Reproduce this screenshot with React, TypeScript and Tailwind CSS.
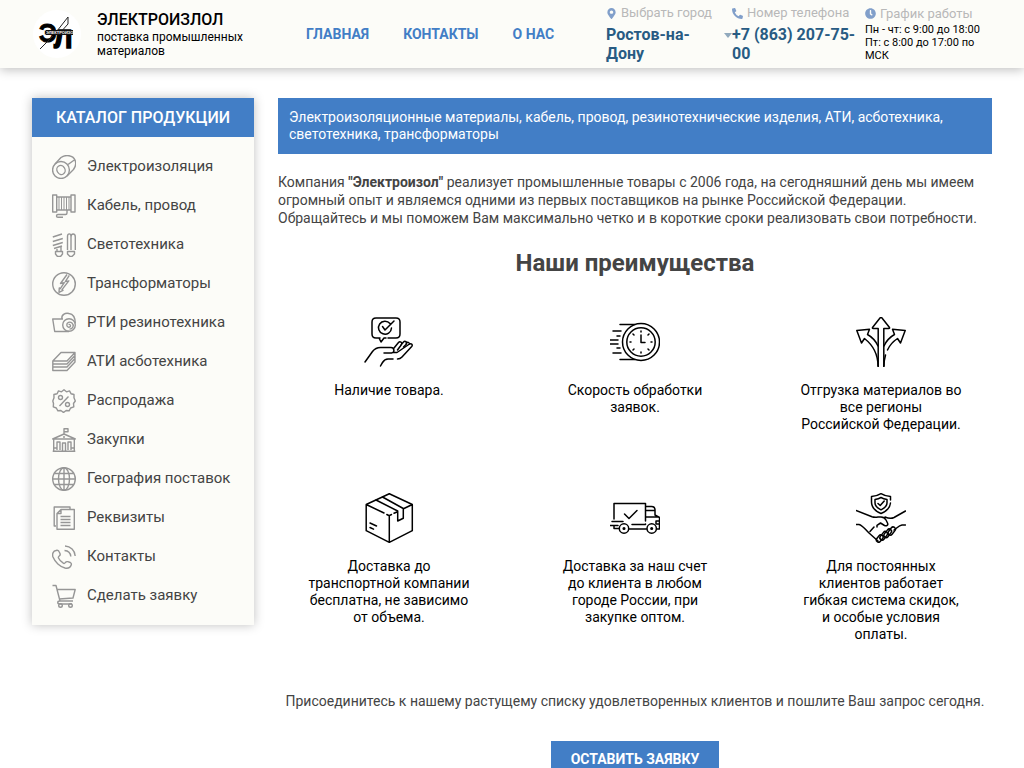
import type { ReactNode } from 'react';
import { FaClock, FaMapMarkerAlt, FaPhoneAlt } from 'react-icons/fa';

type Item = { title: string; icon: ReactNode };

const navigation = ['Главная', 'Контакты', 'О нас'];

const catalog: Item[] = [
  {
    title: 'Электроизоляция',
    icon: (
      <>
        <ellipse cx="9" cy="15" rx="8.4" ry="8.5" />
        <ellipse cx="9" cy="15" rx="4" ry="4.6" transform="rotate(-30 9 15)" />
        <path d="M3 9 9 2.500C14-1 21 .5 23 5c1.200 3 .8 6.500-1.500 9.500L15 21M16 9.500l7-5" />
      </>
    ),
  },
  {
    title: 'Кабель, провод',
    icon: (
      <>
        <path d="M.7 1h4v17h-4zM19 1h4v17h-4zM4.700 3H19M4.700 16H19" />
        <path d="M7 3v13M9.500 3v13M12 3v13M14.500 3v13M17 3v13" strokeWidth="1" />
        <path d="M15 16v3c0 1-.5 1.500-1.500 1.500H6c-2 0-2 2.800 0 2.800h5" />
      </>
    ),
  },
  {
    title: 'Светотехника',
    icon: (
      <>
        <path d="M.8 4 10 1M.8 8.500l10-3M.8 12.500l10-3M2 15.500l8-2.500M5 14.500v4M9 13v5.500M3.500 18.500h7v2.500L8.500 23.500h-3L3.500 21z" />
        <path d="M15.500 17V3.500c0-3.500 3.500-3.500 3.500 0V17M19 4c0-4 4.300-4 4.300 0v13M15.500 18.500h7v2.500l-2.500 2.500h-2l-2.500-2.500z" />
      </>
    ),
  },
  {
    title: 'Трансформаторы',
    icon: (
      <>
        <circle cx="12" cy="12" r="11.300" />
        <path d="m15 2.500-6.500 9 3.800-.8-4 6-1-.8-.3 4.500 4-2-1-.8 6.800-8.700-3.500.7 4-6.300" />
      </>
    ),
  },
  {
    title: 'РТИ резинотехника',
    icon: (
      <>
        <path d="M11 8H.7l2 12.500H17M10 8c-1-4 3-6.500 7-5.500 4 .5 6.300 4 6.300 10" />
        <circle cx="17" cy="14" r="6.300" />
        <path d="M17 14c0-1 1.500-.5 1.500.8 0 2-3.500 2-3.700-.5-.2-3 3.200-4 5.200-2.200 2.500 2.300.8 6-2.500 6" />
      </>
    ),
  },
  {
    title: 'АТИ асботехника',
    icon: (
      <path d="M9 2.500h14l-8 8.500H.8zM.8 11v3H15l8-8.500v-3M.8 14v3H15l8-8.500v-3M.8 17v3.500H15l8-8.500V8.500" />
    ),
  },
  {
    title: 'Распродажа',
    icon: (
      <>
        <path d="m12 .8 2.500 2 3-.9 1.500 2.800 3 .8v3.200l1.300 3.300-1.800 2.500.3 3.300-3.200 1.200-1.500 2.800-3-.3-2.600 2-2.600-2-3 .3-1.600-2.800-3-1.200.2-3.300L.8 12 2 8.700 1.900 5.500l3.200-.8 1.400-2.800 3 .9z" />
        <circle cx="8.500" cy="8.500" r="2" />
        <circle cx="15.500" cy="15.500" r="2" />
        <path d="M16.500 7.500 7.500 17" />
      </>
    ),
  },
  {
    title: 'Закупки',
    icon: (
      <path d="M.7 23.300h22.600M1.700 23V11M22.300 23V11M.7 11l11.300-5 11.300 5zM12 6V.8h4v3h-4M5 22v-8h3v8M10.500 23v-8h3v8M16 22v-8h3v8M11 9h2M2 20h3M19 20h3" />
    ),
  },
  {
    title: 'География поставок',
    icon: (
      <>
        <circle cx="12" cy="12" r="11.300" />
        <ellipse cx="12" cy="12" rx="5.500" ry="11.300" />
        <path d="M.7 12h22.600M12 .7v22.600M2.500 6.500h19M2.500 17.500h19" />
      </>
    ),
  },
  {
    title: 'Реквизиты',
    icon: (
      <path d="M4 20H2.200V1H18v2M9 3.500h13.300v19.800H5V7.500zv4H5M8.500 10.500h10M8.500 13.500h10M8.500 16.500h10M8.500 19.500h10" />
    ),
  },
  {
    title: 'Контакты',
    icon: (
      <>
        <path d="M4 5.500C1.500 6-.2 8.500 1 12c2 5 7 9.800 12 11 3 .6 5.500-.8 6.300-3.300.3-1-.2-1.700-1-2.200l-2.500-.8c-1-.3-2 .2-2.500 1-.5.700-1.300 1-2 .5-2-1.200-4-3.500-4.800-5.200-.3-.8 0-1.500.7-2 .8-.5 1.200-1.500.8-2.500L7 6.500C6.500 5.300 5.200 5 4 5.500z" />
        <path d="M13 1c5.500.2 10 4.500 10.200 10M12.500 5.500c4 .3 6 2.500 6.300 6" />
      </>
    ),
  },
  {
    title: 'Сделать заявку',
    icon: (
      <>
        <path d="M.5 1.500H4L8 17h13M5.200 5.500h18l-2.200 8.500L7.200 15M8 17c-3 0-3 3 0 3h12" />
        <circle cx="8.500" cy="21.500" r="1.800" />
        <circle cx="18.500" cy="21.500" r="1.800" />
      </>
    ),
  },
];

const advantages: Item[] = [
  {
    title: 'Наличие товара.',
    icon: (
      <>
        <path d="M16 21h-4c-2.700 0-4-1.400-4-4V5c0-2.700 1.300-4 4-4h20c2.700 0 4 1.300 4 4v12c0 2.600-1.300 4-4 4h-8M15 21l2 4 3-4h2" />
        <path d="M26 6.500A6.500 6.500 0 1 0 27.500 11M18.500 9.500 21 13l9-9" />
        <path d="M1 45 8.500 34.500c2-2.600 4.500-4 8-4H27c3.500 0 4 5 .5 5.500H20M29 35.500h4L45.500 27c2-1 3.500.7 2.200 2.500L38 40c-1.200 1.300-2.500 2-4.500 2M29 42h-5c-3 0-4 1-5.500 3.500L16.500 49" />
        <path d="m30 31 4.500-5.500c1.500-1.700 4.200 0 3 2L33.500 33M36.500 28.500l3-3.500c1.500-1.700 4.200 0 3 2l-3 3M42 26c1.500-1.500 3.500-.5 3.500 1" />
      </>
    ),
  },
  {
    title: 'Скорость обработки заявок.',
    icon: (
      <>
        <circle cx="31" cy="25" r="18.500" />
        <circle cx="31" cy="25" r="14.200" />
        <path d="M10 7.500h15M3 14h8M7 19h3M0 23h8M0 27h8M7 31h3M3 36h8M10 42.500h15M31 18v7.500h4M31 14v1M31 35v1M20 25h1M41 25h1M23 17l1 1M39 17l-1 1M23 33l1-1M39 33l-1-1" />
      </>
    ),
  },
  {
    title: 'Отгрузка материалов во все регионы Российской Федерации.',
    icon: (
      <>
        <path d="M22.200 50V11.500h-5c-.8 0-1-.5-.5-1.200L24 1c.7-.8 1.300-.8 2 0l7.300 9.300c.5.700.3 1.200-.5 1.200h-5V50" />
        <path d="M22 49c0-11-4-20-13.500-27.500l-3 4.500L.8 13.500 13.500 12.300l-2 5.200C16 20 19.500 23.500 22 29M28 49c0-4 .5-7.500 1.500-11M31.500 33c2-4.500 5.500-8.500 10-11.500l3 4.500 4.700-12.500-12.700-1.200 2 5.200C34 20 30.500 23.500 28 29" />
      </>
    ),
  },
  {
    title: 'Доставка до транспортной компании бесплатна, не зависимо от объема.',
    icon: (
      <>
        <path d="M20 20 2.200 11.500 25.300.7l23 10.800v26.200l-23 11.600L2.200 37.700V11.500M25.300 49V23M48.300 11.500 40 15.500M33 19l-3 1.300M27.500 21.500l-2.200 1.200-2.500-1.200" />
        <path d="m12 7 21.700 11v10l5.600-2.700V15.500L18.500 4M6 30l6.500 3M6 34.500l3.500 1.700" />
      </>
    ),
  },
  {
    title: 'Доставка за наш счет до клиента в любом городе России, при закупке оптом.',
    icon: (
      <>
        <path d="M4 26V10.500h31.500V28M22 31.500h13.500V31M2 28.500h11M0 32.500h8M4 33v2.500h5M19 36h17.500M47 36h2.500V24.500L45 22V17c0-2-1.200-3.500-3.500-3.500h-6M36 24h13M36 17.500h9M49 28h-3v3h3" />
        <circle cx="14" cy="35.500" r="4.700" />
        <circle cx="41.700" cy="35.500" r="4.700" />
        <circle cx="14" cy="35.500" r=".8" />
        <circle cx="41.700" cy="35.500" r=".8" />
        <path d="m14.500 21 4.500 4.500 8-8" />
      </>
    ),
  },
  {
    title: 'Для постоянных клиентов работает гибкая система скидок, и особые условия оплаты.',
    icon: (
      <>
        <path d="M34.500 7V3.500C31 3.500 28 2.500 25 .7 22 2.500 19 3.500 15.500 3.500V9c0 5.500 3.500 9 9.500 11.500 5.500-2.300 9-5.500 9.500-10.500" />
        <path d="M25 4.500c-2 1.200-4 1.700-6 2V10c0 3.200 2.500 5 6 6.800 3.500-1.800 6-3.600 6-6.800V6.500c-2-.3-4-.8-6-2zM22 10.500l2.200 2 4-4.500" />
        <path d="m0 17.500 16 6.200c2 .7 4 .6 6 .3h3c3 0 4 1.200 5 3l1.500 3c1 2-1 3.500-3 2.500l-4-2.500-3.500 2.300v1.700M49.500 18 38 24.500c-3 1.500-5.500 1-9-.5M0 31.500h3c4 1 6 5 10 8.500l9 8M49.500 32H46c-3 .5-5 3-8 5M18 34l-4 4.500" />
        <rect x="21.500" y="41.500" width="4.500" height="8" rx="2.200" transform="rotate(38 23.700 45.500)" />
        <rect x="25.500" y="38" width="4.500" height="9.500" rx="2.200" transform="rotate(38 27.700 42.700)" />
        <rect x="29.500" y="35.500" width="4.500" height="9.500" rx="2.200" transform="rotate(38 31.700 40.200)" />
        <rect x="33.500" y="33.500" width="4.500" height="9" rx="2.200" transform="rotate(38 35.700 38)" />
      </>
    ),
  },
];

function Logo() {
  return (
    <svg viewBox="0 0 48 48" className="size-12 shrink-0 font-['Liberation_Sans',sans-serif] font-bold" aria-hidden="true">
      <circle cx="24" cy="24" r="24" fill="#fff" />
      <text x="6" y="32" fontSize="25" stroke="#000" strokeWidth="1">Э</text>
      <text x="21" y="38" fontSize="26" stroke="#000" strokeWidth="1.500">Л</text>
      <path d="M7 39 20 26M24 21 35 7v7l-9 10" fill="none" stroke="#222" />
      <rect x="13" y="20" width="27" height="5" fill="#111" />
      <text x="13" y="24" fontSize="4" fill="#fff">ЭЛЕКТРОИЗОЛ</text>
    </svg>
  );
}

function Header() {
  return (
    <header className="relative flex h-17 bg-[#fcfcf8] pl-[33px] pr-8 shadow-[0_2px_10px_rgba(0,0,0,0.25)]">
      <a href="#" className="flex w-[273px] shrink-0 items-center gap-4 text-black">
        <Logo />
        <span className="w-40">
          <span className="block text-base leading-5 font-medium">ЭЛЕКТРОИЗЛОЛ</span>
          <span className="block text-xs leading-[14px]">поставка промышленных материалов</span>
        </span>
      </a>

      <nav className="flex flex-1 items-center gap-[34px] text-sm font-bold whitespace-nowrap text-[#427ec6] uppercase">
        {navigation.map((title) => (
          <a key={title} href="#">{title}</a>
        ))}
      </nav>

      <div className="flex w-[386px] shrink-0 pt-1">
        <div className="w-[126px]">
          <div className="flex h-[18px] items-center gap-1 text-[13px] text-[#b8b8b8]">
            <FaMapMarkerAlt className="size-[11px] text-[#819fca]" />
            Выбрать город
          </div>
          <button type="button" className="flex w-full items-start justify-between pt-[3px] text-left text-base leading-[19px] font-bold text-[#285b83]">
            <span className="w-24">Ростов-на-Дону</span>
            <svg viewBox="0 0 8 5" className="mt-2 h-[5px] w-2" fill="#91a9bd" aria-hidden="true">
              <path d="M0 0h8L4 5z" />
            </svg>
          </button>
        </div>
        <div className="w-[133px]">
          <div className="flex h-[18px] items-center gap-1 text-[13px] text-[#b8b8b8]">
            <FaPhoneAlt className="size-[11px] text-[#819fca]" />
            Номер телефона
          </div>
          <a href="tel:+78632077500" className="block pt-[3px] text-base leading-[19px] font-bold text-[#285b83]">
            +7 (863) 207-75-00
          </a>
        </div>
        <div className="w-[127px]">
          <div className="flex h-[19px] items-center gap-1 text-[13px] text-[#b8b8b8]">
            <FaClock className="size-[11px] text-[#819fca]" />
            График работы
          </div>
          <p className="text-[11px] leading-[13px] text-black">
            Пн - чт: с 9:00 до 18:00
            <br />
            Пт: с 8:00 до 17:00 по
            <br />
            МСК
          </p>
        </div>
      </div>
    </header>
  );
}

function Sidebar() {
  return (
    <aside className="w-[222px] shrink-0 self-start bg-[#fcfcf8] shadow-[0_0_10px_rgba(0,0,0,0.25)]">
      <h2 className="bg-[#427ec6] text-center text-base leading-[39px] font-medium text-white">КАТАЛОГ ПРОДУКЦИИ</h2>
      <ul className="py-[10px]">
        {catalog.map(({ title, icon }) => (
          <li key={title}>
            <a href="#" className="flex h-[39px] items-center gap-[11px] pl-5 text-[15px] whitespace-nowrap text-[#444]">
              <svg viewBox="0 0 24 24" className="size-6 shrink-0" fill="none" stroke="#969696" strokeWidth="1.4" strokeLinejoin="round" aria-hidden="true">
                {icon}
              </svg>
              {title}
            </a>
          </li>
        ))}
      </ul>
    </aside>
  );
}

export default function App() {
  return (
    <div className="min-h-screen bg-white font-[Roboto,sans-serif] text-[#444]">
      <Header />
      <div className="flex gap-6 px-8 pt-[30px]">
        <Sidebar />
        <main className="min-w-0 flex-1">
          <div className="bg-[#427ec6] px-[11px] py-[11px] text-sm leading-[17px] text-white">
            Электроизоляционные материалы, кабель, провод, резинотехнические изделия, АТИ, асботехника, светотехника, трансформаторы
          </div>
          <p className="mt-[19px] text-sm leading-[18px]">
            Компания <b>"Электроизол"</b> реализует промышленные товары с 2006 года, на сегодняшний день мы имеем огромный опыт и являемся одними из первых поставщиков на рынке Российской Федерации.
            <br />
            Обращайтесь и мы поможем Вам максимально четко и в короткие сроки реализовать свои потребности.
          </p>

          <h1 className="mt-5 text-center text-2xl font-bold">Наши преимущества</h1>
          <ul className="mt-[38px] grid grid-cols-3 gap-x-6 gap-y-[60px]">
            {advantages.map(({ title, icon }) => (
              <li key={title} className="flex flex-col items-center gap-[15px] px-[30px] text-center text-sm leading-[17px] text-black">
                <svg viewBox="0 0 50 50" className="size-[50px]" fill="none" stroke="#000" strokeWidth="1.5" strokeLinejoin="round" strokeLinecap="round" aria-hidden="true">
                  {icon}
                </svg>
                <p>{title}</p>
              </li>
            ))}
          </ul>

          <div className="mt-12 pb-8 text-center">
            <p className="text-sm">Присоединитесь к нашему растущему списку удовлетворенных клиентов и пошлите Ваш запрос сегодня.</p>
            <button type="button" className="mt-[30px] bg-[#427ec6] px-5 py-2 text-sm font-bold text-white">
              ОСТАВИТЬ ЗАЯВКУ
            </button>
          </div>
        </main>
      </div>
    </div>
  );
}
